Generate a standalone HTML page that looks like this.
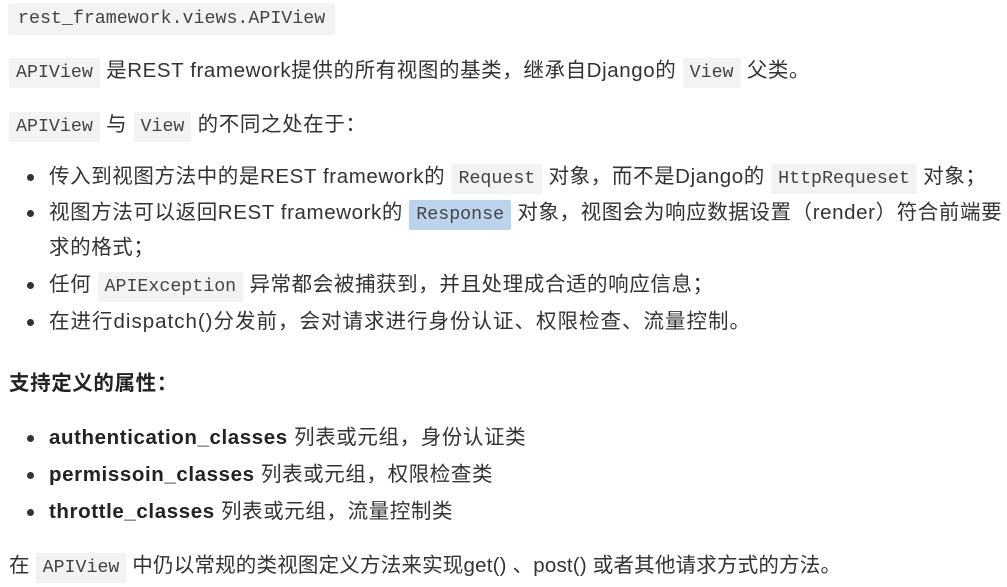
<!DOCTYPE html>
<html><head><meta charset="utf-8"><style>
body{margin:0;width:1007px;height:587px;background:#fff;overflow:hidden;position:relative;font-family:"Liberation Sans","Noto Sans CJK SC",sans-serif;font-size:20.5px;letter-spacing:0.6px;color:#333;}
.l{position:absolute;white-space:nowrap;line-height:24px;}
code{font-family:"Liberation Mono",monospace;font-size:18.3px;letter-spacing:0;background:#f3f3f3;padding:5px 7px;border-radius:2px;color:#444;}
.b{position:absolute;left:27px;width:7px;height:7px;border-radius:50%;background:#333;}
b{font-weight:bold;color:#222}
.sel{background:#bcd3ee;}
</style></head><body>
<div class="l" style="left:8px;top:5px"><code style="padding:6px 10px">rest_framework.views.APIView</code></div>
<div class="l" style="left:9px;top:59px"><code>APIView</code> 是REST framework提供的所有视图的基类，继承自Django的 <code>View</code> 父类。</div>
<div class="l" style="left:9px;top:113px"><code>APIView</code> 与 <code>View</code> 的不同之处在于：</div>

<div class="b" style="top:174px"></div>
<div class="l" style="left:49px;top:165px">传入到视图方法中的是REST framework的 <code>Request</code> 对象，而不是Django的 <code>HttpRequeset</code> 对象；</div>
<div class="b" style="top:210px"></div>
<div class="l" style="left:49px;top:201px">视图方法可以返回REST framework的 <code class="sel">Response</code> 对象，视图会为响应数据设置（render）符合前端要</div>
<div class="l" style="left:49px;top:236px">求的格式；</div>
<div class="b" style="top:282px"></div>
<div class="l" style="left:49px;top:273px">任何 <code>APIException</code> 异常都会被捕获到，并且处理成合适的响应信息；</div>
<div class="b" style="top:319px"></div>
<div class="l" style="left:49px;top:310px;letter-spacing:1px">在进行dispatch()分发前，会对请求进行身份认证、权限检查、流量控制。</div>

<div class="l" style="left:9px;top:372px"><b>支持定义的属性：</b></div>

<div class="b" style="top:435px"></div>
<div class="l" style="left:49px;top:426px"><b>authentication_classes</b> 列表或元组，身份认证类</div>
<div class="b" style="top:472px"></div>
<div class="l" style="left:49px;top:463px"><b>permissoin_classes</b> 列表或元组，权限检查类</div>
<div class="b" style="top:509px"></div>
<div class="l" style="left:49px;top:500px"><b>throttle_classes</b> 列表或元组，流量控制类</div>

<div class="l" style="left:9px;top:554px;letter-spacing:0.2px">在 <code>APIView</code> 中仍以常规的类视图定义方法来实现get() 、post() 或者其他请求方式的方法。</div>
</body></html>
